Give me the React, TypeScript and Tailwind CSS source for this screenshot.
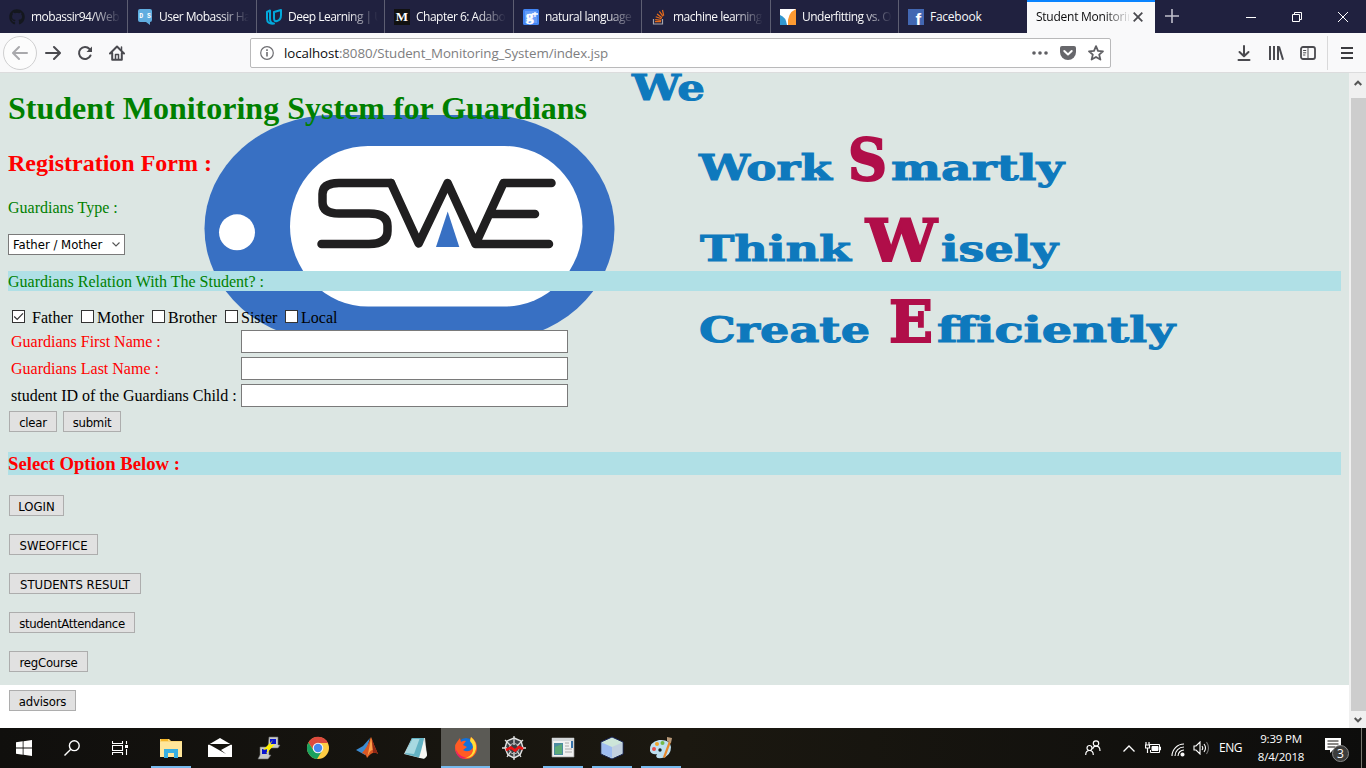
import React from "react";
import { FaGithub } from "react-icons/fa";

const ui = "font-['Open_Sans','Noto_Sans',sans-serif]";

function TabItem({ w, icon, title, fade = true, last = false }: { w: string; icon: React.ReactNode; title: string; fade?: boolean; last?: boolean }) {
  return (
    <div className={`${w} flex h-[33px] shrink-0 items-center overflow-hidden pl-[9px] ${last ? "" : "border-r border-[#5d5e72]"}`}>
      <span className="flex size-4 shrink-0 items-center justify-center">{icon}</span>
      <span
        className={`ml-[6px] w-[90px] shrink-0 overflow-hidden whitespace-nowrap text-[12px] leading-[18px] text-[#f9f9fa] ${fade ? "tracking-[-0.5px] [mask-image:linear-gradient(to_right,black_60px,transparent_90px)]" : "tracking-[-0.25px]"}`}
      >
        {title}
      </span>
    </div>
  );
}

const svg16 = "block size-4";

function Tabs() {
  return (
    <div className="flex h-[33px] bg-[#20213f]">
      <TabItem w="w-[128px]" title="mobassir94/Web" icon={<FaGithub className="size-4 text-[#14171e]" />} />
      <TabItem
        w="w-[129px]"
        title="User Mobassir Ha"
        icon={
          <svg viewBox="0 0 16 16" className={svg16}>
            <path d="M3 0h10q2 0 2 2v9q0 2-2 2v3l-4-3H3q-2 0-2-2V2q0-2 2-2z" fill="#60ade0" />
            <text x="2.3" y="8.6" fontSize="6.5" fontWeight="700" fill="#fff" fontFamily="Liberation Mono" textLength="11.5">DS</text>
          </svg>
        }
      />
      <TabItem
        w="w-[128px]"
        title="Deep Learning | U"
        icon={
          <svg viewBox="0 0 16 16" className={svg16} fill="none" stroke="#02a9dc" strokeWidth="2" strokeLinejoin="round">
            <path d="M1 3l3-1.500v8q0 5 4 5q-7 1-7-5zM8 3v6q0 4 3 3q4-1 4-6V1z" />
          </svg>
        }
      />
      <TabItem
        w="w-[129px]"
        title="Chapter 6: Adabo"
        icon={<span className="flex size-4 items-center justify-center bg-[#111] font-['Liberation_Serif',serif] text-[13px] font-bold text-white">M</span>}
      />
      <TabItem
        w="w-[128px]"
        title="natural language"
        icon={
          <svg viewBox="0 0 16 16" className={svg16}>
            <rect width="16" height="16" rx="1.5" fill="#4285f4" />
            <path d="M2 2h12v12H2z" fill="#a9c8fb" opacity=".35" />
            <text x="3" y="12" fontSize="15" fontWeight="700" fill="#fff" stroke="#fff" strokeWidth=".6" fontFamily="Liberation Serif">g</text>
            <path d="M12 3v5M10 5h5" stroke="#fff" strokeWidth="1.300" />
          </svg>
        }
      />
      <TabItem
        w="w-[129px]"
        title="machine learning"
        icon={
          <svg viewBox="0 0 16 16" className={svg16} fill="none">
            <path d="M2.5 10v5h9v-5" stroke="#a5a6ad" strokeWidth="1.2" />
            <path d="M4 12.7h6M4.2 10.6l6 .7M4.7 7.8l5.8 2M6 5l5 3.8M8.4 2.4l3.6 5M11.5 1l1.2 5.6" stroke="#e86c1b" strokeWidth="1.2" />
          </svg>
        }
      />
      <TabItem
        w="w-[128px]"
        title="Underfitting vs. O"
        icon={
          <svg viewBox="0 0 16 16" className={svg16}>
            <path d="M0 0h16v16H0z" fill="#fff" />
            <path d="M0 6q6 2 7 10H0z" fill="#3297cf" />
            <path d="M16 0v16H8Q7 4 16 0z" fill="#fd9a32" />
          </svg>
        }
      />
      <TabItem
        w="w-[128px]"
        last
        fade={false}
        title="Facebook"
        icon={
          <svg viewBox="0 0 16 16" className={svg16}>
            <rect width="16" height="16" fill="#4267b2" />
            <text x="7.500" y="16" fontSize="17" fontWeight="700" fill="#fff" fontFamily="Liberation Sans">f</text>
          </svg>
        }
      />
      <div className="flex w-[128px] shrink-0 items-center border-t-2 border-[#0a84ff] bg-[#f9f9fa] pl-[9px]">
        <span className="mt-[-2px] w-[93px] overflow-hidden whitespace-nowrap text-[12px] tracking-[-0.25px] text-[#0c0c0d] [mask-image:linear-gradient(to_right,black_68px,transparent_95px)]">
          Student Monitoring
        </span>
        <svg viewBox="0 0 10 10" className="ml-[4px] mt-[-1px] size-[10px]"><path d="M.7.7l8.6 8.6M9.300.7L.7 9.300" stroke="#4a4a4f" strokeWidth="1.8" /></svg>
      </div>
      <svg viewBox="0 0 14 14" className="ml-[10px] mt-[9px] size-[14px]"><path d="M7 0v14M0 7h14" stroke="#c0c0cc" strokeWidth="1.6" /></svg>
      <div className="ml-auto mr-[18px] flex items-center gap-[36px]">
        <svg viewBox="0 0 10 10" className="size-[10px]"><path d="M0 5.5h10" stroke="#fff" /></svg>
        <svg viewBox="0 0 10 10" className="size-[10px]" fill="none" stroke="#fff"><path d="M.5 2.500h7v7h-7zM2.500 2.500v-2h7v7h-2" /></svg>
        <svg viewBox="0 0 10 10" className="size-[10px]"><path d="M0 0l10 10M10 0L0 10" stroke="#fff" /></svg>
      </div>
    </div>
  );
}

const stroke = { fill: "none", stroke: "#4a4a4f", strokeWidth: 2, strokeLinecap: "round", strokeLinejoin: "round" } as const;

function NavBar() {
  return (
    <div className="flex h-10 items-center border-b border-[#dcdcdd] bg-[#f9f9fa] pl-[3px]">
      <span className="flex size-[34px] items-center justify-center rounded-full border border-[#cfcfd0] bg-[#fcfcfc]">
        <svg viewBox="0 0 16 16" className="size-4" {...stroke} stroke="#a9a9ac"><path d="M15 8H1.500M7 2L1 8l6 6" /></svg>
      </span>
      <svg viewBox="0 0 16 16" className="ml-[8px] size-4" {...stroke}><path d="M1 8h13.500M9 2l6 6-6 6" /></svg>
      <svg viewBox="0 0 16 16" className="ml-4 size-4" {...stroke}>
        <path d="M13.500 10.500A6 6 0 1 1 12.500 4" />
        <path d="M15 1.500V7H9.500z" fill="#4a4a4f" stroke="none" />
      </svg>
      <svg viewBox="0 0 16 16" className="ml-4 size-4" {...stroke}>
        <path d="M1 8.500L8 1.500l7 7M3.200 8v6.800h9.600V8" />
        <path d="M6.500 14V9.500h3V14M12.500 2v3" strokeWidth="1.5" />
      </svg>
      <div className="ml-[125px] mt-px flex h-[30px] w-[861px] items-center rounded-[2px] border border-[#b9b9ba] bg-white pl-[9px]">
        <svg viewBox="0 0 14 14" className="size-[14px]" fill="none" stroke="#6e6e72" strokeWidth="1.2"><circle cx="7" cy="7" r="6.300" /><path d="M7 6v4.500M7 3.300v1.600" strokeWidth="1.6" /></svg>
        <span className="ml-[10px] mt-[2px] whitespace-nowrap text-[13.33px] tracking-[-0.1px] text-[#7e7e80]">
          <span className="text-[#0c0c0d]">localhost</span>:8080/Student_Monitoring_System/index.jsp
        </span>
        <svg viewBox="0 0 16 4" className="ml-auto h-1 w-4" fill="#5f5f63"><circle cx="2" cy="2" r="1.800" /><circle cx="8" cy="2" r="1.800" /><circle cx="14" cy="2" r="1.800" /></svg>
        <svg viewBox="0 0 16 14" className="ml-[12px] h-[14px] w-4"><path d="M2 0h12q2 0 2 2v4a8 8 0 0 1-16 0V2q0-2 2-2z" fill="#67676b" /><path d="M4.300 5L8 8.500 11.700 5" fill="none" stroke="#fff" strokeWidth="2" strokeLinecap="round" strokeLinejoin="round" /></svg>
        <svg viewBox="0 0 16 16" className="ml-[12px] mr-[6px] size-4" {...stroke} stroke="#5f5f63" strokeWidth="1.800"><path d="M8 1.200l2 4.700 5 .4-3.800 3.300 1.200 5L8 12l-4.400 2.600 1.200-5L1 6.300l5-.4z" /></svg>
      </div>
      <div className="ml-auto flex h-[34px] items-center">
        <svg viewBox="0 0 14 16" className="h-4 w-[14px]" {...stroke}><path d="M7 1v10M2.500 7L7 11.300 11.500 7M1.500 15h11" /></svg>
        <svg viewBox="0 0 16 14" className="ml-[17px] h-[14px] w-4" {...stroke} strokeLinecap="butt" strokeWidth="2"><path d="M2 0v14M6 0v14M10 0v14M11 .5l4 13.200" /></svg>
        <svg viewBox="0 0 16 14" className="ml-4 h-[14px] w-4" {...stroke} strokeWidth="1.800"><rect x="1" y="1" width="14" height="12" rx="2" /><path d="M8 1v12M3.500 4.500h2.300M3.500 6.800h2.300M3.500 9h1.500" strokeWidth="1" /></svg>
        <span className="ml-[11px] h-[34px] w-px bg-[#d9d9da]" />
        <svg viewBox="0 0 12 12" className="ml-[13px] mr-[13px] size-[12px]"><path d="M0 1h12M0 6h12M0 11h12" stroke="#3c3c40" strokeWidth="2" /></svg>
      </div>
    </div>
  );
}

function Backdrop() {
  const slogan: [string, number, number, number, boolean][] = [
    ["We", 632, 99.5, 73, false],
    ["Work", 699, 180, 133, false],
    ["S", 848, 180, 39, true],
    ["martly", 891, 180, 173, false],
    ["Think", 700, 260.500, 151, false],
    ["W", 866, 260.500, 71, true],
    ["isely", 941, 260.500, 117, false],
    ["Create", 699, 342, 171, false],
    ["E", 889, 342, 44, true],
    ["fficiently", 937, 342, 238, false],
  ];
  return (
    <svg viewBox="0 73 1349 612" className="absolute left-0 top-0 h-[612px] w-[1349px] bg-[#dce6e3]">
      <rect x="204.500" y="115" width="410" height="227" rx="128" ry="113.500" fill="#3870c3" />
      <rect x="290" y="146" width="292.500" height="160.500" rx="78" ry="80" fill="#fff" />
      <circle cx="237" cy="232.300" r="18" fill="#fff" />
      <g fill="none" stroke="#201f20" strokeWidth="8.500" strokeLinecap="round" strokeLinejoin="round">
        <path d="M391 183H339Q322.500 183 322.500 194V202Q322.500 213.500 339 213.500H369Q387.500 213.500 387.500 226V231Q387.500 244 369 244H321.500" />
        <path d="M391 183L418.700 243.500L447.600 183L475.500 244L503.500 183H551.500M493 214H535M475.500 244H549" />
      </g>
      <path d="M447.700 211.500L436 247H459.300z" fill="#3870c3" />
      {slogan.map(([t, x, y, w, big]) => (
        <text
          key={t + x}
          x={x}
          y={y}
          textLength={w}
          lengthAdjust="spacingAndGlyphs"
          fontSize={big ? 58 : 36}
          fontWeight="700"
          fontFamily="DejaVu Serif, serif"
          fill={big ? "#b00e49" : "#0e79bd"}
          stroke={big ? "#b00e49" : "#0e79bd"}
          strokeWidth={big ? 2 : 1}
        >
          {t}
        </text>
      ))}
    </svg>
  );
}

const tahoma = "font-['DejaVu_Sans_Condensed','DejaVu_Sans',sans-serif] [font-stretch:condensed] text-[13px]";

function Btn({ w, tight = "tracking-normal", children }: { w: string; tight?: string; children: string }) {
  return (
    <button className={`${w} ${tight} ${tahoma} flex h-[21px] shrink-0 items-center justify-center whitespace-nowrap border border-[#adadad] bg-[#e1e1e1] pt-[2px] leading-none text-black`}>
      {children}
    </button>
  );
}

function Check({ label, w, checked = false }: { label: string; w: string; checked?: boolean }) {
  return (
    <label className={`${w} flex shrink-0 items-center ${checked ? "gap-[7px]" : "gap-[3px]"}`}>
      <span className="size-[13px] shrink-0 border border-[#333] bg-white">
        {checked && <svg viewBox="0 0 11 11" className="size-[11px]"><path d="M1.200 5.500l3 3L10 2.300" fill="none" stroke="#333" strokeWidth="1.200" /></svg>}
      </span>
      <span className="mt-[3px] leading-[18px]">{label}</span>
    </label>
  );
}

function Field({ label, color }: { label: string; color: string }) {
  return (
    <label className="flex h-[27px] items-start">
      <span className={`${color} w-[230px] shrink-0 pt-[3px] leading-[18px]`}>{label}</span>
      <input className="h-[23px] w-[327px] border border-[#7a7a7a] bg-white" />
    </label>
  );
}

function Page() {
  return (
    <div className="relative h-[655px] w-[1349px] overflow-hidden bg-white">
      <Backdrop />
      <main className="relative flex flex-col px-2 pt-[17px] font-['Liberation_Serif',serif] text-[16px] text-black">
        <h1 className="h-[60px] whitespace-nowrap text-[32px] font-bold leading-[37px] text-[#008000]">Student Monitoring System for Guardians</h1>
        <h2 className="h-[49px] text-[24px] font-bold leading-[27px] text-[#ff0000]">Registration Form :</h2>
        <p className="h-[35px] leading-[18px] text-[#008000]">Guardians Type :</p>
        <div className="flex h-[21px] w-[117px] items-center border border-[#7a7a7a] bg-white pl-1">
          <span className={`${tahoma} whitespace-nowrap pt-px`}>Father / Mother</span>
          <svg viewBox="0 0 8 5" className="ml-auto mr-1 h-[5px] w-2"><path d="M.5.5L4 4 7.500.5" fill="none" stroke="#555" strokeWidth="1.100" /></svg>
        </div>
        <p className="mt-4 h-5 bg-[#b0e0e6] pt-px leading-5 text-[#008000]">Guardians Relation With The Student? :</p>
        <div className="mt-[15px] flex h-[21px] items-center pl-1">
          <Check label="Father" w="w-[69px]" checked />
          <Check label="Mother" w="w-[71px]" />
          <Check label="Brother" w="w-[73px]" />
          <Check label="Sister" w="w-[60px]" />
          <Check label="Local" w="w-[60px]" />
        </div>
        <div className="mt-[3px] flex flex-col pl-[3px]">
          <Field label="Guardians First Name :" color="text-[#ff0000]" />
          <Field label="Guardians Last Name :" color="text-[#ff0000]" />
          <Field label="student ID of the Guardians Child :" color="text-black" />
        </div>
        <div className="flex gap-[6px] pl-px">
          <Btn w="w-[48px]" tight="tracking-[-0.25px]">clear</Btn>
          <Btn w="w-[58px]" tight="tracking-[-0.25px]">submit</Btn>
        </div>
        <h3 className="mb-5 mt-5 h-[23px] bg-[#b0e0e6] text-[18.720px] font-bold leading-[23px] text-[#ff0000]">Select Option Below :</h3>
        <div className="flex flex-col gap-[18px] pl-px">
          <Btn w="w-[55px]">LOGIN</Btn>
          <Btn w="w-[89px]">SWEOFFICE</Btn>
          <Btn w="w-[132px]">STUDENTS RESULT</Btn>
          <Btn w="w-[126px]" tight="tracking-[-0.38px]">studentAttendance</Btn>
          <Btn w="w-[79px]" tight="tracking-[-0.2px]">regCourse</Btn>
          <Btn w="w-[67px]" tight="tracking-[-0.2px]">advisors</Btn>
        </div>
      </main>
    </div>
  );
}

function ScrollBar() {
  return (
    <div className="flex h-[655px] w-[17px] flex-col items-center bg-[#f0f0f0] pl-px">
      <svg viewBox="0 0 8 6" className="mt-[7px] h-[6px] w-2"><path d="M.7 5L4 1.700 7.300 5" fill="none" stroke="#555" strokeWidth="2" /></svg>
      <div className="mt-[12px] h-[613px] w-[15px] bg-[#cdcdcd]" />
      <svg viewBox="0 0 8 6" className="mt-[6px] h-[6px] w-2"><path d="M.7 1L4 4.300 7.300 1" fill="none" stroke="#555" strokeWidth="2" /></svg>
    </div>
  );
}

function Slot({ children, open = false, active = false }: { children: React.ReactNode; open?: boolean; active?: boolean }) {
  return (
    <div className={`flex h-10 w-[49px] shrink-0 flex-col items-center ${active ? "bg-[#5b5a55]" : "pr-px"}`}>
      <div className="flex h-[38px] items-center pt-[2px]">{children}</div>
      {open && <div className={`h-[2px] bg-[#76b9ed] ${active ? "w-full" : "w-10"}`} />}
    </div>
  );
}

const big = "block size-6";

function TaskBar() {
  return (
    <div className="flex h-10 bg-gradient-to-r from-[#100f0d] via-[#1b1810] to-[#0d0d0c] text-white">
      <div className="flex w-[147px] items-center gap-8 pl-4">
        <svg viewBox="0 0 16 16" className="size-4" fill="#fff"><path d="M0 2.200L6.700 1.300V7.500H0zM7.500 1.200L16 0v7.500H7.500zM0 8.500h6.700v6.200L0 13.800zM7.500 8.500H16V16l-8.500-1.200z" /></svg>
        <svg viewBox="0 0 16 16" className="size-4" fill="none" stroke="#fff" strokeWidth="1.400"><circle cx="10.300" cy="5.700" r="4.900" /><path d="M6.800 9.200L.5 15.500" /></svg>
        <svg viewBox="0 0 16 16" className="size-4" fill="none" stroke="#fff" strokeWidth="1.100"><path d="M.5 1v2.500h10V1M.5 15v-2.500h10V15M.5 5.500h10v5H.5zM14.500 1v3M14.500 9v6" /><path d="M13 5h3v3h-3z" fill="#fff" stroke="none" /></svg>
      </div>
      <Slot open>
        <svg viewBox="0 0 24 24" className={big}><path d="M1 3h9l2 2h11v16H1z" fill="#fbd777" /><path d="M1 6h22v15H1z" fill="#ffe69a" /><path d="M2 3h7v2H2z" fill="#f5b629" /><path d="M5 22v-9h14v9h-4v-5H9v5z" fill="#36aee0" /></svg>
      </Slot>
      <Slot>
        <svg viewBox="0 0 24 24" className={big}><path d="M0 9l12-7 12 7v12H0z" fill="#fff" /><path d="M0 8h24L13 14l5 4L3 9.500z" fill="#16140f" /></svg>
      </Slot>
      <Slot>
        <svg viewBox="0 0 24 24" className={big}><path d="M12 1h9v8h2l-2 3H11zM3 11h9v8h2l-3 4H1l2-4z" fill="#c8cac9" stroke="#666" strokeWidth=".6" /><path d="M13 3h6v5h-6zM5 13h5v5H5z" fill="#0713d0" /><path d="M16 4L6 14l5-1-2 5 9-10-5 1z" fill="#ffef00" /></svg>
      </Slot>
      <Slot>
        <svg viewBox="0 0 24 24" className={big}><circle cx="12" cy="12" r="11" fill="#ffcd43" /><path d="M2.400 6.500A11 11 0 0 1 22 7H12L7.500 14z" fill="#dd4b3e" /><path d="M2.400 6.500A11 11 0 0 0 11 23l5-8-8 0z" fill="#1aa15f" /><circle cx="12" cy="12" r="5.300" fill="#f4f4f4" /><circle cx="12" cy="12" r="4.200" fill="#4688f1" /></svg>
      </Slot>
      <Slot>
        <svg viewBox="0 0 24 24" className={big}><path d="M1 14l7-4 7-8-5 17z" fill="#3c8bd0" /><path d="M7 17q5-5 9-16 3 8 7 17-5-4-11 4-1-4-5-5z" fill="#d95723" /><path d="M16 1q-1 8-4 21 3-9 6-8z" fill="#ffa04a" /><path d="M17 3q2 7 6 15-3-2-5-1z" fill="#8e2716" /></svg>
      </Slot>
      <Slot>
        <svg viewBox="0 0 24 24" className={big}><path d="M8 2h13l2 18-3 3-20-5z" fill="#d5dddd" /><path d="M8 2h12l-3 20-16-4z" fill="#63b3c4" /><path d="M8.500 3h7L10 18l-9-1z" fill="#b9e2e8" opacity=".8" /><path d="M20 4l3 15-2 3-6 0z" fill="#f8f8f4" /></svg>
      </Slot>
      <Slot open active>
        <svg viewBox="0 0 24 24" className={big}>
          <circle cx="12" cy="11" r="9" fill="#1371da" />
          <path d="M3 6l3-4 1 4q3-2 5-1l-3 4 4 2-4 3q5 3 9-1 3-5-2-9l1-3q6 4 6 11a11 11 0 0 1-22 0q0-4 2-6z" fill="#ff5b24" />
          <path d="M17 1q6 5 5 12-2 9-10 9 8-3 7-11 0-3-3-6z" fill="#ffdd38" />
          <path d="M1 10q1 9 11 12-10 3-11-12z" fill="#e92068" />
        </svg>
      </Slot>
      <Slot>
        <svg viewBox="0 0 24 24" className={big}>
          <path d="M12 2l7 3 2 7-3 7-6 3-6-3-3-7 2-7z" fill="#3a4043" stroke="#e2e2e2" strokeWidth="1.400" />
          <path d="M12 0v9M3 4l6 6M21 4l-6 6M0 12h5M19 12h5M5 21l4-6M19 21l-4-6M12 16v8" fill="none" stroke="#dedede" strokeWidth="1.300" />
          <path d="M12 7l4 2 1 4-2 4-3 1-3-1-2-4 1-4z" fill="none" stroke="#b5b5b5" />
          <path d="M4 14l5-2.500 4 3 4-3.500 4 2" fill="none" stroke="#ef1313" strokeWidth="2.600" />
        </svg>
      </Slot>
      <Slot open>
        <svg viewBox="0 0 24 24" className={big}><path d="M1 2h22v19H1z" fill="#f1f1f1" stroke="#999" strokeWidth=".7" /><path d="M1 2h22v3H1z" fill="#d3d7d9" /><path d="M3 7h9v12H3z" fill="#4b8ba0" /><path d="M4 11l7-3v10H4z" fill="#5caa78" /><path d="M14 7h4M14 10h4M14 13h7M14 16h7" stroke="#aaa" /><path d="M20 5h2v7h-2z" fill="#3773ab" /></svg>
      </Slot>
      <Slot open>
        <svg viewBox="0 0 24 24" className={big}><path d="M12 1l11 5v12l-11 5L1 18V6z" fill="#cde6d9" stroke="#19245a" /><path d="M1.700 6.500L12 11v11L1.700 17.500z" fill="#9ebcf0" /><path d="M22.300 6.500L12 11v11l10.300-4.500z" fill="#c1d0df" /></svg>
      </Slot>
      <Slot open>
        <svg viewBox="0 0 24 24" className={big}><path d="M1 15Q0 6 10 4q11-1 12 7 0 9-9 11-8 1-5-4-5 1-7-3z" fill="#bddff0" /><circle cx="5" cy="13" r="2" fill="#e94e4c" /><circle cx="8" cy="8" r="2" fill="#f0a62c" /><circle cx="13.500" cy="7" r="2" fill="#73b947" /><circle cx="11" cy="14" r="1.700" fill="#16201e" /><path d="M20 5l2 1-6 16-2-1z" fill="#e6872b" /><path d="M18 1l5 1-1 5-4-2z" fill="#b99978" /></svg>
      </Slot>
      <div className={`${ui} ml-auto flex items-center`}>
        <svg viewBox="0 0 16 16" className="mr-[22px] size-4" fill="none" stroke="#fff" strokeWidth="1.200"><circle cx="4.500" cy="8" r="2.500" /><path d="M.7 15q0-4.500 3.800-4.500T8.300 15" /><circle cx="11" cy="3.500" r="2.700" /><path d="M7.500 9q1-2.800 3.500-2.800 4 0 4 4.800" /></svg>
        <svg viewBox="0 0 12 7" className="mr-[10px] h-[7px] w-3" fill="none" stroke="#fff" strokeWidth="1.300"><path d="M.5 6.500L6 1l5.500 5.500" /></svg>
        <svg viewBox="0 0 16 12" className="mr-[10px] h-3 w-4" fill="none" stroke="#fff"><path d="M4.500 2.500h10v8h-9V8M14.500 5h1v3h-1" /><path d="M7 4.500h6v4H7z" fill="#fff" /><path d="M1 0v3M4 0v3M.5 3h4v3h-4zM2.500 6v5" strokeWidth="1.200" /></svg>
        <svg viewBox="0 0 14 14" className="mr-[8px] mt-[3px] size-[14px]" fill="none" stroke="#fff" strokeWidth="1.100"><path d="M1 13A12 12 0 0 1 13 1M4 13a9 9 0 0 1 9-9M7 13a6 6 0 0 1 6-6" /><circle cx="11.500" cy="11.500" r="1.500" fill="#fff" /></svg>
        <svg viewBox="0 0 17 14" className="mr-[9px] h-[14px] w-[17px]" fill="none" stroke="#fff" strokeWidth="1.100"><path d="M1 5h2l4-4v12L3 9H1zM9 5q1.500 2 0 4M11 3q3 4 0 8" /><path d="M13.500 1q4 6 0 12" stroke="#777" /></svg>
        <span className="w-[24px] text-[12px] leading-4 tracking-[-0.5px]">ENG</span>
        <div className="ml-[10px] flex w-[56px] flex-col items-center whitespace-nowrap text-[11.500px] leading-[18px] tracking-[-0.200px]">
          <span>9:39 PM</span>
          <span>8/4/2018</span>
        </div>
        <svg viewBox="0 0 26 26" className="ml-[16px] mt-1 h-[26px] w-[26px]">
          <path d="M0 1h16v12H8l-3 3v-3H0z" fill="#fff" />
          <path d="M2.500 4h11M2.500 7h11M2.500 10h8" stroke="#15130f" />
          <circle cx="15.500" cy="16.500" r="8" fill="#3c3c3b" stroke="#888" />
          <text x="15.500" y="20.800" textAnchor="middle" fontSize="12" fill="#fff" fontFamily="Open Sans">3</text>
        </svg>
        <span className="ml-[10px] mr-1 h-10 w-px bg-[#77776f]" />
      </div>
    </div>
  );
}

export default function App() {
  return (
    <div className={`${ui} flex h-[768px] w-[1366px] flex-col overflow-hidden bg-white`}>
      <Tabs />
      <NavBar />
      <div className="flex h-[655px]">
        <Page />
        <ScrollBar />
      </div>
      <TaskBar />
    </div>
  );
}
